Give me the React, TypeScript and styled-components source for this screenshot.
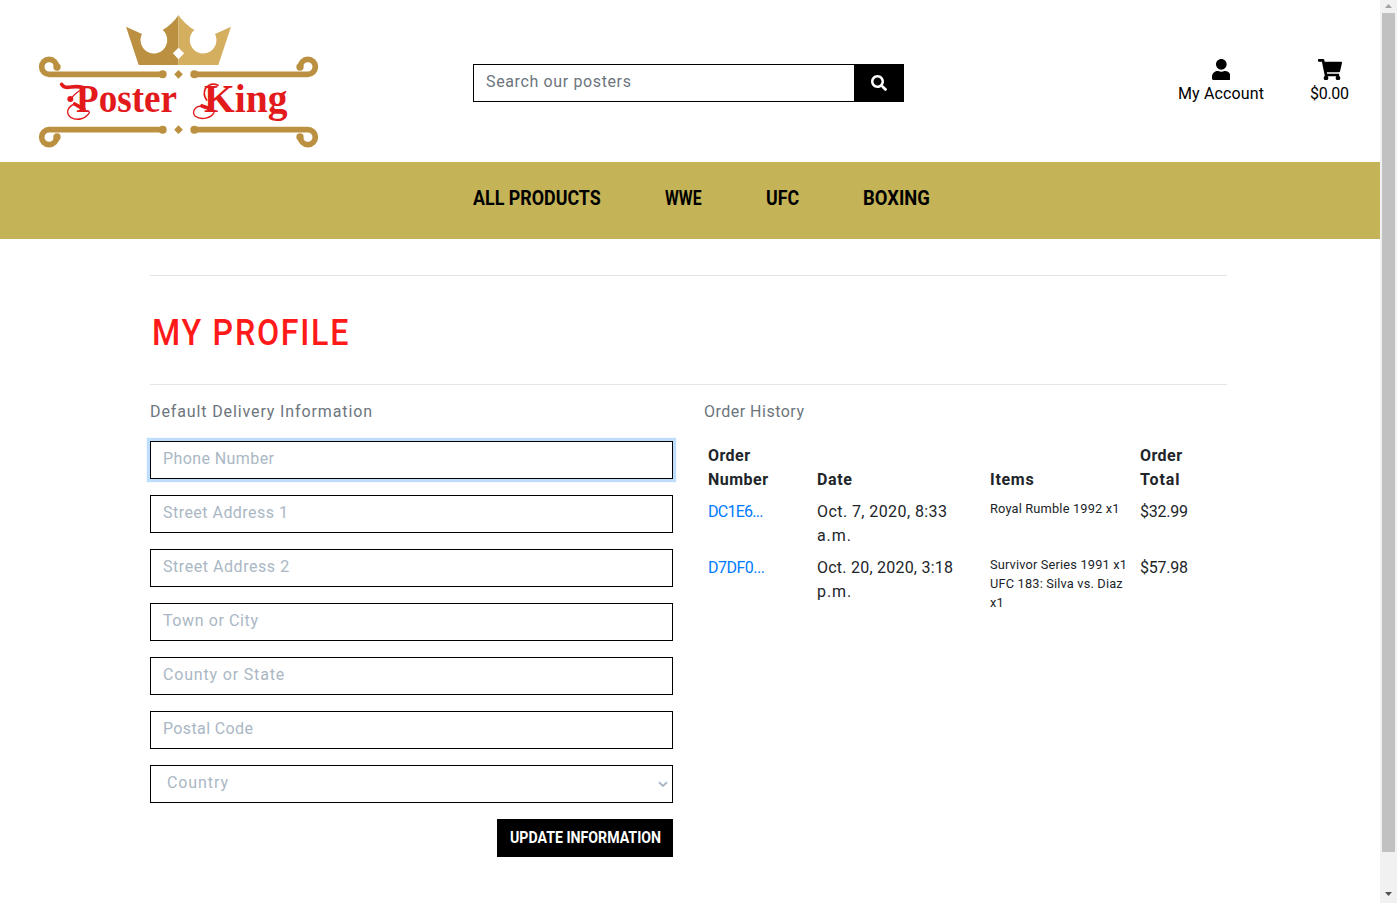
import React from 'react';
import styled, { createGlobalStyle } from 'styled-components';
import { FaSearch, FaShoppingCart, FaUser } from 'react-icons/fa';

const GlobalStyle = createGlobalStyle`
  *, *::before, *::after { box-sizing: border-box; }
  html, body { margin: 0; height: 903px; overflow: hidden; background: #fff; }
  body {
    font-family: Roboto, "Open Sans", sans-serif;
    font-size: 16px;
    line-height: 24px;
    color: #212529;
  }
`;

const Window = styled.div`
  display: flex;
  height: 903px;
`;

const Page = styled.div`
  flex: 1;
  min-width: 0;
  background: #fff;
`;

const Spaced = styled.span<{ $ls: number }>`
  letter-spacing: ${({ $ls }) => $ls}px;
  margin-right: ${({ $ls }) => -$ls}px;
  white-space: nowrap;
`;

const Condensed = styled.span<{ $scale: number }>`
  display: inline-block;
  white-space: nowrap;
  transform: scaleX(${({ $scale }) => $scale});
  transform-origin: left center;
`;

const Header = styled.header`
  display: flex;
  height: 162px;
  padding: 0 31px 0 20px;
`;

const LogoSvg = styled.svg`
  display: block;
  width: 320px;
  height: 162px;
`;

const SearchForm = styled.form`
  display: flex;
  width: 431px;
  height: 38px;
  margin: 64px 0 0 133px;
`;

const SearchInput = styled.input`
  flex: 1;
  min-width: 0;
  padding: 0 12px 3px;
  border: 1px solid #000;
  border-right: 0;
  border-radius: 0;
  outline: none;
  font: inherit;
  letter-spacing: 0.63px;
  &::placeholder { color: #6c757d; opacity: 1; }
`;

const SearchButton = styled.button`
  display: flex;
  align-items: center;
  justify-content: center;
  width: 50px;
  padding: 0;
  border: 0;
  background: #000;
  color: #fff;
  font-size: 16px;
`;

const Actions = styled.div`
  display: flex;
  gap: 46px;
  margin: 58.7px 0 0 auto;
  color: #000;
`;

const Action = styled.a<{ $width: number; $icon: number }>`
  display: flex;
  flex-direction: column;
  align-items: center;
  width: ${({ $width }) => $width}px;
  svg {
    width: ${({ $icon }) => $icon}px;
    height: 21.33px;
    margin-bottom: 2px;
  }
`;

const Nav = styled.nav`
  display: flex;
  gap: 64px;
  height: 77px;
  padding: 24px 0 0 472.5px;
  background: #c4b357;
`;

const NavItem = styled.a<{ $width: number }>`
  width: ${({ $width }) => $width}px;
  font-size: 20px;
  font-weight: 700;
  color: #000;
`;

const Main = styled.main`
  padding: 36px 153px 0 150px;
`;

const Rule = styled.hr`
  height: 1px;
  margin: 0;
  border: 0;
  background: #e5e5e5;
`;

const Title = styled.h2`
  margin: 0;
  height: 108px;
  padding-left: 1.5px;
  font-size: 37px;
  font-weight: 500;
  line-height: 114px;
  letter-spacing: 2px;
  color: #ff1a1a;
`;

const Columns = styled.div`
  display: grid;
  grid-template-columns: 523px 523px;
  column-gap: 31px;
`;

const Caption = styled.p`
  margin: 15px 0 17px;
  color: #6c757d;
`;

const Form = styled.form`
  display: flex;
  flex-direction: column;
  gap: 16px;
`;

const Field = styled.input<{ $ls: number; $focused?: boolean }>`
  width: 100%;
  height: 38px;
  padding: 0 12px 3px;
  border: 1px solid #000;
  border-radius: 0;
  outline: none;
  box-shadow: ${({ $focused }) => ($focused ? '0 0 0 3.2px #bfdeff' : 'none')};
  font: inherit;
  letter-spacing: ${({ $ls }) => $ls}px;
  &::placeholder { color: #aab7c4; opacity: 1; }
`;

const Select = styled.div`
  display: flex;
  align-items: center;
  justify-content: space-between;
  height: 38px;
  padding: 0 4px 2px 16px;
  border: 1px solid #000;
  color: #aab7c4;
  svg { margin-top: 2px; }
`;

const SubmitButton = styled.button`
  align-self: flex-end;
  width: 176px;
  height: 38px;
  padding: 0 0 1px 12.5px;
  border: 0;
  background: #000;
  color: #fff;
  font-family: inherit;
  font-size: 16px;
  font-weight: 700;
  text-align: left;
`;

const Orders = styled.table`
  width: 100%;
  margin-top: -1px;
  table-layout: fixed;
  border-collapse: collapse;
  th, td { padding: 4px; text-align: left; }
  th { vertical-align: bottom; }
  td { vertical-align: top; }
`;

const OrderLink = styled.a`
  color: #007bff;
`;

const ItemList = styled.div`
  margin-top: -1px;
  font-size: 12.8px;
  line-height: 19.2px;
`;

const Scrollbar = styled.div`
  display: flex;
  flex-direction: column;
  align-items: center;
  width: 17px;
  background: #f1f1f1;
  padding-top: 4px;
`;

const Thumb = styled.div`
  width: 13px;
  height: 839px;
  margin: 5px 0 40px;
  background: #c1c1c1;
`;

const gold = '#bb9141';

const Scroll = ({ y, flip }: { y: number; flip?: boolean }) => (
  <g>
    {['', 'translate(951 0) scale(-1 1)'].map((side) => (
      <g key={side} transform={side}>
        <g transform={flip ? `translate(0 ${y}) scale(1 -1)` : `translate(0 ${y})`}>
          <path d="M428 0H88A22.5 22.5 0 1 1 110 -22" fill="none" stroke={gold} strokeWidth="17" />
          <circle cx="428" cy="0" r="12" fill={gold} />
          <circle cx="111" cy="-22" r="11" fill={gold} />
        </g>
      </g>
    ))}
    <path d={`M475.500 ${y - 13}l13 13l-13 13l-13 -13z`} fill={gold} />
  </g>
);

const Logo = () => (
  <LogoSvg viewBox="0 0 960 486" aria-label="Poster King">
    <path d="M318 80L366 102A40 40 0 1 0 428 90Q458 72 475.500 45V195H356Z" fill={gold} />
    <path d="M633 80L585 102A40 40 0 1 1 523 90Q493 72 475.500 45V195H595Z" fill="#d5af60" />
    <path d="M475.500 143l17 17l-17 18l-17 -18z" fill="#fff" />
    <Scroll y={223} />
    <Scroll y={389} flip />
    <g fill="#e31a1c" fontFamily='"Liberation Serif", serif' fontWeight="700" fontSize="118">
      <text x="168" y="335" textLength="303" lengthAdjust="spacingAndGlyphs">Poster</text>
      <text x="552" y="335" textLength="251" lengthAdjust="spacingAndGlyphs">King</text>
    </g>
    <g fill="none" stroke="#e31a1c" strokeLinecap="round">
      <path d="M125 253C136 272 158 254 186 262" strokeWidth="11" />
      <path d="M182 270Q160 284 153 297" strokeWidth="4" />
      <path d="M192 328L164 312" strokeWidth="11" />
      <path d="M164 312C142 320 136 340 152 352C172 364 198 356 208 338" strokeWidth="4" />
      <path d="M574 328L546 318" strokeWidth="11" />
      <path d="M546 318C524 318 514 336 526 349C544 362 574 354 582 338" strokeWidth="4" />
      <path d="M560 300Q548 284 556 266Q572 246 594 256" strokeWidth="5" />
    </g>
    <circle cx="151" cy="297" r="9" fill="#e31a1c" />
  </LogoSvg>
);

const navItems = [
  { label: 'ALL PRODUCTS', width: 128, scale: 0.893 },
  { label: 'WWE', width: 37, scale: 0.79 },
  { label: 'UFC', width: 33, scale: 0.89 },
  { label: 'BOXING', width: 67, scale: 0.92 },
];

const fields = [
  { label: 'Phone Number', ls: 0.41 },
  { label: 'Street Address 1', ls: 0.47 },
  { label: 'Street Address 2', ls: 0.55 },
  { label: 'Town or City', ls: 0.6 },
  { label: 'County or State', ls: 0.83 },
  { label: 'Postal Code', ls: 0.37 },
];

const orders = [
  {
    id: 'DC1E6...', idLs: -0.75, date: 'Oct. 7, 2020, 8:33', dateLs: 0.42, half: 'a.m.',
    items: ['Royal Rumble 1992 x1'], total: '$32.99',
  },
  {
    id: 'D7DF0...', idLs: -0.5, date: 'Oct. 20, 2020, 3:18', dateLs: 0.23, half: 'p.m.',
    items: ['Survivor Series 1991 x1', 'UFC 183: Silva vs. Diaz', 'x1'], total: '$57.98',
  },
];

export default function App() {
  return (
    <Window>
      <GlobalStyle />
      <Page>
        <Header>
          <Logo />
          <SearchForm>
            <SearchInput placeholder="Search our posters" />
            <SearchButton type="button" aria-label="Search"><FaSearch /></SearchButton>
          </SearchForm>
          <Actions>
            <Action $width={86} $icon={18.67}><FaUser /><Spaced $ls={0.14}>My Account</Spaced></Action>
            <Action $width={39} $icon={24}><FaShoppingCart /><Spaced $ls={-0.3}>$0.00</Spaced></Action>
          </Actions>
        </Header>
        <Nav>
          {navItems.map((n) => (
            <NavItem key={n.label} $width={n.width}><Condensed $scale={n.scale}>{n.label}</Condensed></NavItem>
          ))}
        </Nav>
        <Main>
          <Rule />
          <Title><Condensed $scale={0.87}>MY PROFILE</Condensed></Title>
          <Rule />
          <Columns>
            <section>
              <Caption><Spaced $ls={0.88}>Default Delivery Information</Spaced></Caption>
              <Form>
                {fields.map((f, i) => (
                  <Field key={f.label} placeholder={f.label} $ls={f.ls} $focused={i === 0} />
                ))}
                <Select>
                  <Spaced $ls={0.9}>Country</Spaced>
                  <svg width="10" height="7" viewBox="0 0 10 7">
                    <path d="M1 1.300L5 5L9 1.300" fill="none" stroke="#aab7c4" strokeWidth="2" />
                  </svg>
                </Select>
                <SubmitButton type="button"><Condensed $scale={0.885}>UPDATE INFORMATION</Condensed></SubmitButton>
              </Form>
            </section>
            <section>
              <Caption><Spaced $ls={0.49}>Order History</Spaced></Caption>
              <Orders>
                <colgroup><col width="109" /><col width="173" /><col width="150" /><col width="91" /></colgroup>
                <thead>
                  <tr>
                    <th><Spaced $ls={0.44}>Order</Spaced><br /><Spaced $ls={0.48}>Number</Spaced></th>
                    <th><Spaced $ls={0.66}>Date</Spaced></th>
                    <th><Spaced $ls={0.7}>Items</Spaced></th>
                    <th><Spaced $ls={0.44}>Order</Spaced><br /><Spaced $ls={0.9}>Total</Spaced></th>
                  </tr>
                </thead>
                <tbody>
                  {orders.map((o) => (
                    <tr key={o.id}>
                      <td><OrderLink><Spaced $ls={o.idLs}>{o.id}</Spaced></OrderLink></td>
                      <td><Spaced $ls={o.dateLs}>{o.date}</Spaced><br /><Spaced $ls={0.9}>{o.half}</Spaced></td>
                      <td><ItemList>{o.items.map((t) => <div key={t}><Spaced $ls={0.17}>{t}</Spaced></div>)}</ItemList></td>
                      <td><Spaced $ls={-0.25}>{o.total}</Spaced></td>
                    </tr>
                  ))}
                </tbody>
              </Orders>
            </section>
          </Columns>
        </Main>
      </Page>
      <Scrollbar>
        <svg width="7" height="4" viewBox="0 0 7 4"><path d="M3.500 0L7 4H0Z" fill="#a3a3a3" /></svg>
        <Thumb />
        <svg width="7" height="4" viewBox="0 0 7 4"><path d="M0 0H7L3.500 4Z" fill="#505050" /></svg>
      </Scrollbar>
    </Window>
  );
}
